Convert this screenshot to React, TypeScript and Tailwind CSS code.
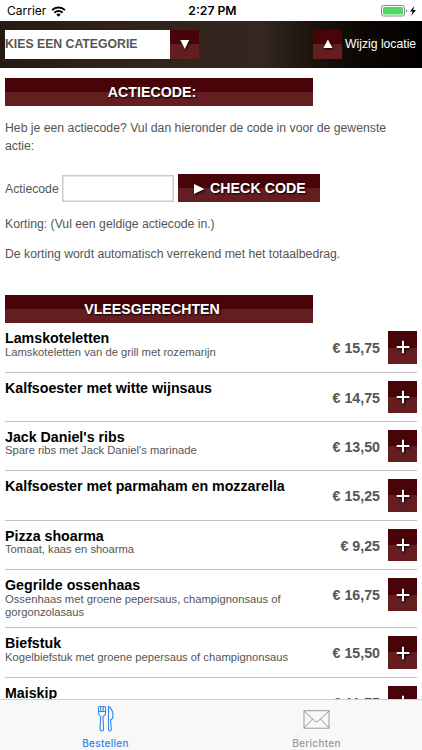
import React from "react";

const glossy = "bg-[linear-gradient(to_bottom,#480408_50%,#641e20_50%)]";
const shadowText = "[text-shadow:1px_1px_2px_#000]";

const dishes = [
  { name: "Lamskoteletten", text: "Lamskoteletten van de grill met rozemarijn", price: "€ 15,75" },
  { name: "Kalfsoester met witte wijnsaus", text: "", price: "€ 14,75" },
  { name: "Jack Daniel's ribs", text: "Spare ribs met Jack Daniel's marinade", price: "€ 13,50" },
  { name: "Kalfsoester met parmaham en mozzarella", text: "", price: "€ 15,25" },
  { name: "Pizza shoarma", text: "Tomaat, kaas en shoarma", price: "€ 9,25" },
  {
    name: "Gegrilde ossenhaas",
    text: "Ossenhaas met groene pepersaus, champignonsaus of gorgonzolasaus",
    price: "€ 16,75",
    tall: true,
  },
  { name: "Biefstuk", text: "Kogelbiefstuk met groene pepersaus of champignonsaus", price: "€ 15,50" },
  { name: "Maiskip", text: "", price: "€ 11,75" },
];

function StatusBar() {
  return (
    <div className="grid h-[21px] shrink-0 grid-cols-3 items-center bg-white pl-[7px] pr-[5px] pt-[1px] font-['Inter',sans-serif] text-black">
      <div className="flex items-center gap-[5px] text-[12px]">
        <span>Carrier</span>
        <svg width="15" height="11" viewBox="0 0 15 11" fill="none" stroke="#000">
          <path d="M1 4.1a9.3 9.3 0 0 1 13 0" strokeWidth="2" />
          <path d="M3.4 6.7a5.9 5.9 0 0 1 8.2 0" strokeWidth="1.9" />
          <path d="M7.5 10.8 5.3 8.6a3.1 3.1 0 0 1 4.400 0z" fill="#000" stroke="none" />
        </svg>
      </div>
      <div className="pl-[1px] text-center text-[12.2px] font-semibold">2:27 PM</div>
      <div className="flex items-center justify-end">
        <svg width="36" height="12" viewBox="0 0 36 12">
          <rect x="0.5" y="0.5" width="23" height="10.5" rx="2" fill="#fff" stroke="#888" />
          <rect x="2" y="2" width="20" height="7.5" rx="0.8" fill="#4cd964" />
          <path d="M25 4v3.5q1.3-.4 1.3-1.7T25 4" fill="#888" />
          <path d="M33.3 1 29 6.6h2.7L30.2 11l4.7-5.9h-2.8z" fill="#000" />
        </svg>
      </div>
    </div>
  );
}

function Header() {
  return (
    <div className="flex h-[46.5px] shrink-0 items-start bg-[linear-gradient(90deg,#271a12_0%,#302219_25%,#33271f_62%,#1b120b_75%,#0a0502_88%,#020000_100%)] pl-[5px] pr-[6px] pt-[9px]">
      <div className="flex h-[29px] w-[165px] items-center bg-white text-[12.25px] font-bold text-[#555]">
        KIES EEN CATEGORIE
      </div>
      <div className={`flex h-[29px] w-[29px] items-center justify-center ${glossy}`}>
        <svg width="12" height="12" viewBox="0 0 12 12" className="-mt-[2px] drop-shadow-[1px_1px_1px_#000]">
          <path d="M1.300 2h9L5.800 11z" fill="#fff" />
        </svg>
      </div>
      <div className={`ml-auto flex h-[28.5px] w-[29px] items-center justify-center ${glossy}`}>
        <svg width="12" height="12" viewBox="0 0 12 12" className="drop-shadow-[1px_1px_1px_#000]">
          <path d="M1.300 10h9.200L5.900 1.500z" fill="#fff" />
        </svg>
      </div>
      <div className="ml-[3px] flex h-[29px] w-[71px] items-center whitespace-nowrap text-[12.2px] text-white">
        Wijzig locatie
      </div>
    </div>
  );
}

function Banner({ children }: { children: React.ReactNode }) {
  return (
    <div
      className={`h-[28.5px] w-[308px] pr-[14px] text-center text-[14.2px] font-bold leading-[29px] text-white ${glossy} ${shadowText}`}
    >
      {children}
    </div>
  );
}

export default function App() {
  return (
    <div className="flex h-[750px] w-[422px] flex-col overflow-hidden bg-white font-['Liberation_Sans',Arial,sans-serif] text-[#555]">
      <StatusBar />
      <Header />
      <main className="min-h-0 flex-1 overflow-hidden px-[5px] pt-[10.4px]">
        <Banner>ACTIECODE:</Banner>
        <p className="mt-[12.6px] text-[12.24px] leading-[18.5px]">
          Heb je een actiecode? Vul dan hieronder de code in voor de gewenste
          <br />
          actie:
        </p>
        <div className="mt-[18px] flex items-end">
          <span className="w-[57px] pb-[4px] text-[12.24px] leading-[18px]">Actiecode</span>
          <div className="h-[27px] w-[112px] border border-[#ccc] bg-white shadow-[inset_0_0_0_0.5px_#ccc]" />
          <button
            className={`ml-[4px] flex h-[28.5px] w-[142px] items-center pl-[16px] pt-[1px] text-[14.25px] font-bold text-white ${glossy} ${shadowText}`}
          >
            <svg width="12" height="12" viewBox="0 0 12 12" className="mr-[4px] drop-shadow-[1px_1px_1px_#000]">
              <path d="M0 1 10.500 6 0 11z" fill="#fff" />
            </svg>
            CHECK CODE
          </button>
        </div>
        <p className="mt-[12.5px] text-[12.24px] leading-[18.5px]">Korting: (Vul een geldige actiecode in.)</p>
        <p className="mb-[30.6px] mt-[12px] text-[12.24px] leading-[18.5px]">
          De korting wordt automatisch verrekend met het totaalbedrag.
        </p>
        <Banner>VLEESGERECHTEN</Banner>
        {dishes.map((d) => (
          <div
            key={d.name}
            className={`flex border-b border-[#c4c4c4] pt-[8px] ${d.tall ? "h-[58px]" : "h-[49.45px]"}`}
          >
            <div className="w-[290px]">
              <div className="text-[14.22px] font-bold leading-[14px] text-black">{d.name}</div>
              <div className="pt-[0.5px] text-[11.22px] leading-[13px]">{d.text}</div>
            </div>
            <div className="ml-auto pr-[8px] text-[14.22px] font-bold leading-[34.5px]">{d.price}</div>
            <div className={`flex h-[32.5px] w-[29px] items-center justify-center ${glossy}`}>
              <svg width="14" height="14" viewBox="0 0 14 14" className="drop-shadow-[1px_1px_1px_#000]">
                <path d="M7 .7v12.600M.700 7h12.600" stroke="#fff" strokeWidth="2" />
              </svg>
            </div>
          </div>
        ))}
      </main>
      <nav className="grid h-[51px] shrink-0 grid-cols-2 border-t border-[#d0d0d0] bg-[#f8f8f8] font-['Inter',sans-serif] text-[10px] font-medium tracking-[0.3px]">
        <div className="flex flex-col items-center pt-[5px] text-[#2f87ea]">
          <svg width="18" height="28" viewBox="0 0 18 28" fill="none" stroke="#2f87ea" strokeWidth="1.1">
            <path d="M1.500 3v4.500q0 3 2.300 4L3 24q0 2 1.800 2t1.800-2L6 11.500q2.600-1 2.600-4V3q0-1.500-1.300-1.500H2.800Q1.500 1.500 1.500 3" />
            <path d="M3.800 1.500v5M6.200 1.500v5M1.500 6.500h7" />
            <path d="M11.500 2.500v22q0 1.500 1.400 1.500t1.400-1.500L13.600 15q2.400-1 2.400-4 0-7-4.500-9.500z" />
          </svg>
          <span className="mt-[5px] leading-[10px]">Bestellen</span>
        </div>
        <div className="flex flex-col items-center pt-[10px] text-[#999]">
          <svg width="27" height="19" viewBox="0 0 27 19" fill="none" stroke="#999" strokeWidth="1">
            <rect x="1" y="0.700" width="25" height="17.500" />
            <path d="M1 1l10.500 9.800q2 2 4 0L26 1M1 18l8.500-9M26 18l-8.500-9" />
          </svg>
          <span className="mt-[9px] leading-[10px]">Berichten</span>
        </div>
      </nav>
    </div>
  );
}
